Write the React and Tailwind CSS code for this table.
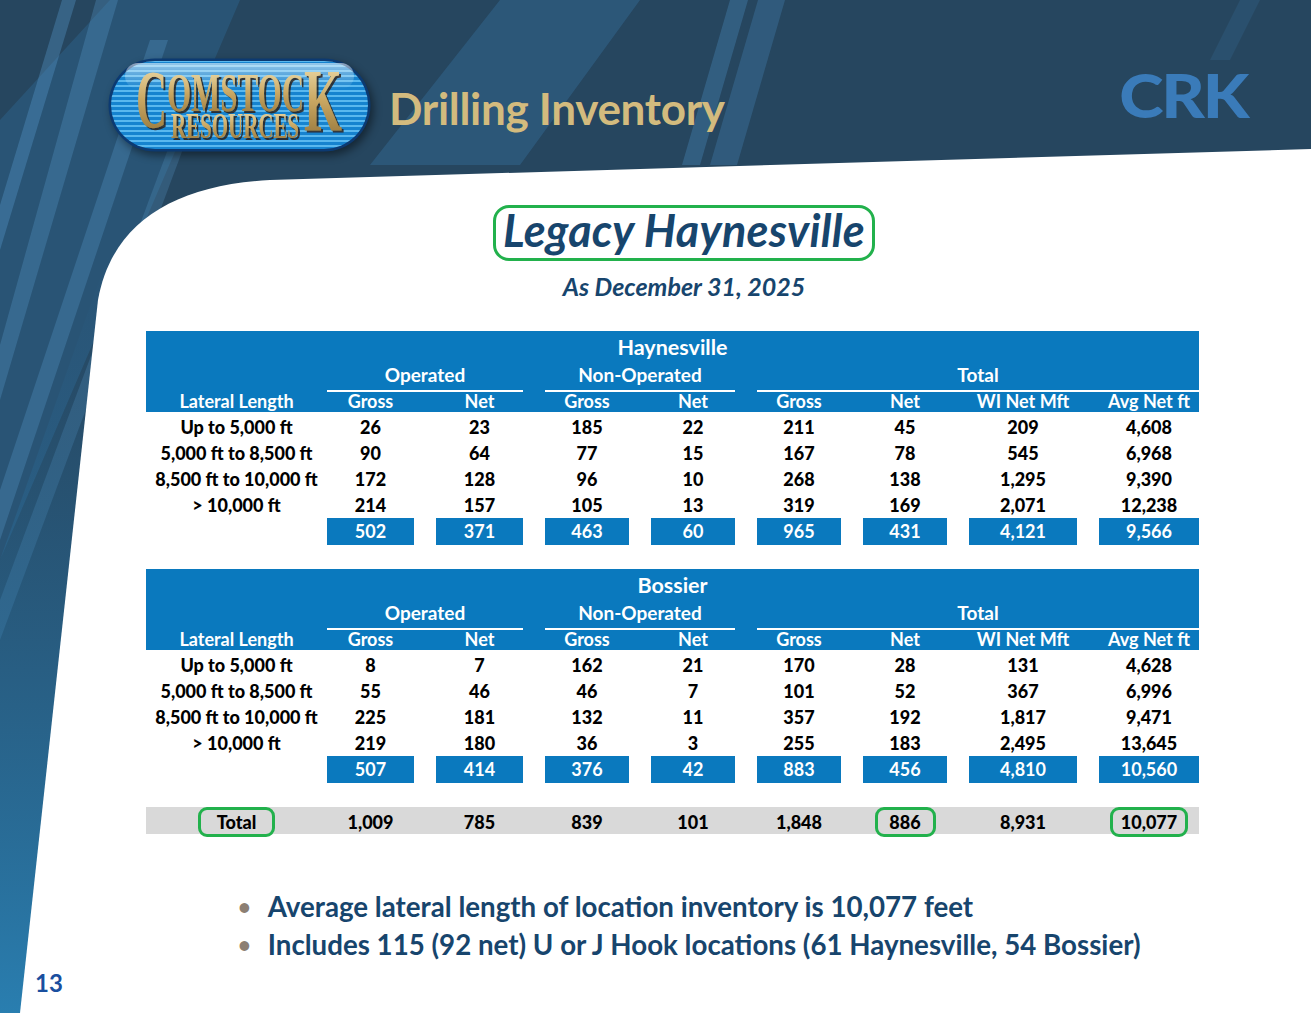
import React from "react";

const F = "font-['Lato','Open_Sans',sans-serif]";
const COLS = "grid grid-cols-[159px_87px_87px_84px_84px_84px_84px_108px_100px] gap-x-[22px]";

const tables = [
  {
    title: "Haynesville",
    rows: [
      ["Up to 5,000 ft", "26", "23", "185", "22", "211", "45", "209", "4,608"],
      ["5,000 ft to 8,500 ft", "90", "64", "77", "15", "167", "78", "545", "6,968"],
      ["8,500 ft to 10,000 ft", "172", "128", "96", "10", "268", "138", "1,295", "9,390"],
      ["> 10,000 ft", "214", "157", "105", "13", "319", "169", "2,071", "12,238"],
    ],
    totals: ["502", "371", "463", "60", "965", "431", "4,121", "9,566"],
  },
  {
    title: "Bossier",
    rows: [
      ["Up to 5,000 ft", "8", "7", "162", "21", "170", "28", "131", "4,628"],
      ["5,000 ft to 8,500 ft", "55", "46", "46", "7", "101", "52", "367", "6,996"],
      ["8,500 ft to 10,000 ft", "225", "181", "132", "11", "357", "192", "1,817", "9,471"],
      ["> 10,000 ft", "219", "180", "36", "3", "255", "183", "2,495", "13,645"],
    ],
    totals: ["507", "414", "376", "42", "883", "456", "4,810", "10,560"],
  },
];

const colHeads = ["Gross", "Net", "Gross", "Net", "Gross", "Net", "WI Net Mft", "Avg Net ft"];

function Background() {
  return (
    <svg className="absolute inset-0" width="1311" height="1013" viewBox="0 0 1311 1013">
      <defs>
        <linearGradient id="lb" x1="0" y1="0" x2="0" y2="1">
          <stop offset="0" stopColor="#2b6a99" stopOpacity="0" />
          <stop offset="1" stopColor="#2a8cc4" stopOpacity="1" />
        </linearGradient>
      </defs>
      <rect width="1311" height="1013" fill="#26465f" />
      <polygon points="500,0 640,0 520,165 370,165" fill="#3a78a8" opacity="0.35" />
      <polygon points="730,0 748,0 700,165 682,165" fill="#4a8cc0" opacity="0.35" />
      <polygon points="758,0 785,0 737,165 710,165" fill="#4a8cc0" opacity="0.3" />
      <polygon points="1240,0 1260,0 1230,60 1210,60" fill="#3a78a8" opacity="0.2" />
      <polygon points="0,120 110,0 240,0 0,560" fill="#2f6590" opacity="0.45" />
      <polygon points="62,0 76,0 0,250 0,205" fill="#5a9ccd" opacity="0.35" />
      <polygon points="96,0 118,0 0,400 0,345" fill="#5a9ccd" opacity="0.3" />
      <polygon points="150,40 168,40 0,540 0,490" fill="#5a9ccd" opacity="0.3" />
      <polygon points="190,90 205,90 0,640 0,600" fill="#5a9ccd" opacity="0.25" />
      <polygon points="0,560 110,250 70,1013 0,1013" fill="url(#lb)" opacity="0.8" />
      <path d="M1311,149 L270,180 C175,185 112,222 98,300 L20,1013 L1311,1013 Z" fill="#ffffff" />
    </svg>
  );
}

// Comstock pill logo
function Logo() {
  return (
    <svg width="265" height="96" viewBox="0 0 265 96" className="shrink-0 drop-shadow-[3px_4px_4px_rgba(0,0,0,0.45)]">
      <defs>
        <pattern id="stripes" width="10" height="5" patternUnits="userSpaceOnUse">
          <rect width="10" height="3" fill="#1683cf" />
          <rect y="3" width="10" height="2" fill="#5ab8ee" />
        </pattern>
        <linearGradient id="gloss" x1="0" y1="0" x2="0" y2="1">
          <stop offset="0" stopColor="#ffffff" stopOpacity="0.55" />
          <stop offset="1" stopColor="#ffffff" stopOpacity="0" />
        </linearGradient>
        <linearGradient id="gold" x1="0" y1="0" x2="0" y2="1">
          <stop offset="0" stopColor="#f5e7b9" />
          <stop offset="0.5" stopColor="#c9a762" />
          <stop offset="1" stopColor="#8a6b32" />
        </linearGradient>
        <filter id="tsh" x="-10%" y="-10%" width="130%" height="130%">
          <feDropShadow dx="2" dy="2" stdDeviation="0.6" floodColor="#2a1e08" floodOpacity="0.8" />
        </filter>
      </defs>
      <rect x="1.5" y="1.5" width="262" height="93" rx="46.5" fill="#0c3a72" />
      <rect x="4" y="4" width="257" height="88" rx="44" fill="url(#stripes)" />
      <rect x="18" y="6" width="229" height="26" rx="13" fill="url(#gloss)" />
      <g fontFamily="'Liberation Serif', serif" fontWeight="700" fill="url(#gold)" filter="url(#tsh)">
        <text x="29" y="70" fontSize="82" textLength="31" lengthAdjust="spacingAndGlyphs">C</text>
        <text x="60" y="54" fontSize="54" textLength="137" lengthAdjust="spacingAndGlyphs">OMSTOC</text>
        <text x="64" y="81" fontSize="36" textLength="128" lengthAdjust="spacingAndGlyphs">RESOURCES</text>
        <text x="197" y="73" fontSize="88" textLength="38" lengthAdjust="spacingAndGlyphs">K</text>
      </g>
    </svg>
  );
}

function DataTable({ t }) {
  return (
    <div className="w-[1053px]">
      <div className="bg-[#0a79be] text-white font-bold">
        <div className="h-[30px] flex items-center justify-center text-[21.5px] pt-[2px]">{t.title}</div>
        <div className={`${COLS} h-[27px] text-[19px]`}>
          <div />
          <div className="col-span-2 border-b-2 border-white flex items-center justify-center">Operated</div>
          <div className="col-span-2 border-b-2 border-white flex items-center justify-center">Non-Operated</div>
          <div className="col-span-4 border-b-2 border-white flex items-center justify-center">Total</div>
        </div>
        <div className={`${COLS} h-[24px] text-[18px] items-center`}>
          <div className="text-center -mr-[22px]">Lateral Length</div>
          {colHeads.map((h, i) => (
            <div key={i} className="text-center">{h}</div>
          ))}
        </div>
      </div>
      <div className="pt-[2px]">
        {t.rows.map((r, i) => (
          <div key={i} className={`${COLS} h-[26px] items-center text-[18px] font-black text-black`}>
            <div className="text-center -mr-[22px] whitespace-nowrap">{r[0]}</div>
            {r.slice(1).map((v, j) => (
              <div key={j} className="text-center">{v}</div>
            ))}
          </div>
        ))}
        <div className={`${COLS} h-[25px] text-[18px] font-bold text-white`}>
          <div />
          {t.totals.map((v, j) => (
            <div key={j} className="bg-[#0a79be] flex items-center justify-center">{v}</div>
          ))}
        </div>
      </div>
    </div>
  );
}

export default function App() {
  const ring = "inline-flex items-center justify-center h-[30px] border-[3px] border-[#22b14c] rounded-[9px]";
  return (
    <div className={`relative w-[1311px] h-[1013px] overflow-hidden ${F}`}>
      <Background />
      <div className="relative flex flex-col">
        {/* header */}
        <div className="flex items-center pl-[107px] pt-[57px] h-[153px]">
          <Logo />
          <div className="ml-[17px] mt-[5px] text-[44px] font-bold text-[#d3bb7e] tracking-[-0.3px]">Drilling Inventory</div>
          <div className="ml-auto mr-[64px] -mt-[21px] text-[60px] font-black text-[#3a7bb9] tracking-[-2px] leading-none scale-x-[1.12] origin-right">CRK</div>
        </div>

        {/* title */}
        <div className="flex flex-col items-center pl-[57px] mt-[52px]">
          <div className="h-[56px] w-[382px] border-[3px] border-[#22b14c] rounded-[16px] flex items-center justify-center">
            <span className="text-[45px] font-bold italic text-[#17456d] leading-none -mt-[5px] tracking-[0.3px]">Legacy Haynesville</span>
          </div>
          <div className="mt-[13px] text-[25px] font-bold italic text-[#17456d] leading-none">As December 31, 2025</div>
        </div>

        {/* tables */}
        <div className="ml-[146px] mt-[32px] flex flex-col gap-[26px]">
          {tables.map((t, i) => (
            <DataTable key={i} t={t} />
          ))}
          <div className={`${COLS} w-[1053px] h-[27px] bg-[#d9d9d9] items-center text-[18px] font-black text-black`}>
            <div className="flex justify-center -mr-[22px]">
              <span className={`${ring} w-[77px]`}>Total</span>
            </div>
            <div className="text-center">1,009</div>
            <div className="text-center">785</div>
            <div className="text-center">839</div>
            <div className="text-center">101</div>
            <div className="text-center">1,848</div>
            <div className="flex justify-center">
              <span className={`${ring} w-[61px]`}>886</span>
            </div>
            <div className="text-center">8,931</div>
            <div className="flex justify-center">
              <span className={`${ring} w-[78px]`}>10,077</span>
            </div>
          </div>
        </div>

        {/* bullets */}
        <ul className="mt-[54px] pl-[238px] flex flex-col text-[27.7px] font-bold text-[#17456d] leading-[38px]">
          <li className="flex items-center gap-[17px]">
            <span className="text-[22px] text-[#8c7f73]">•</span>
            <span>Average lateral length of location inventory is 10,077 feet</span>
          </li>
          <li className="flex items-center gap-[17px]">
            <span className="text-[22px] text-[#8c7f73]">•</span>
            <span>Includes 115 (92 net) U or J Hook locations (61 Haynesville, 54 Bossier)</span>
          </li>
        </ul>

        <div className="pl-[35px] mt-[1px] text-[24px] font-bold text-[#1a4f9f]">13</div>
      </div>
    </div>
  );
}
